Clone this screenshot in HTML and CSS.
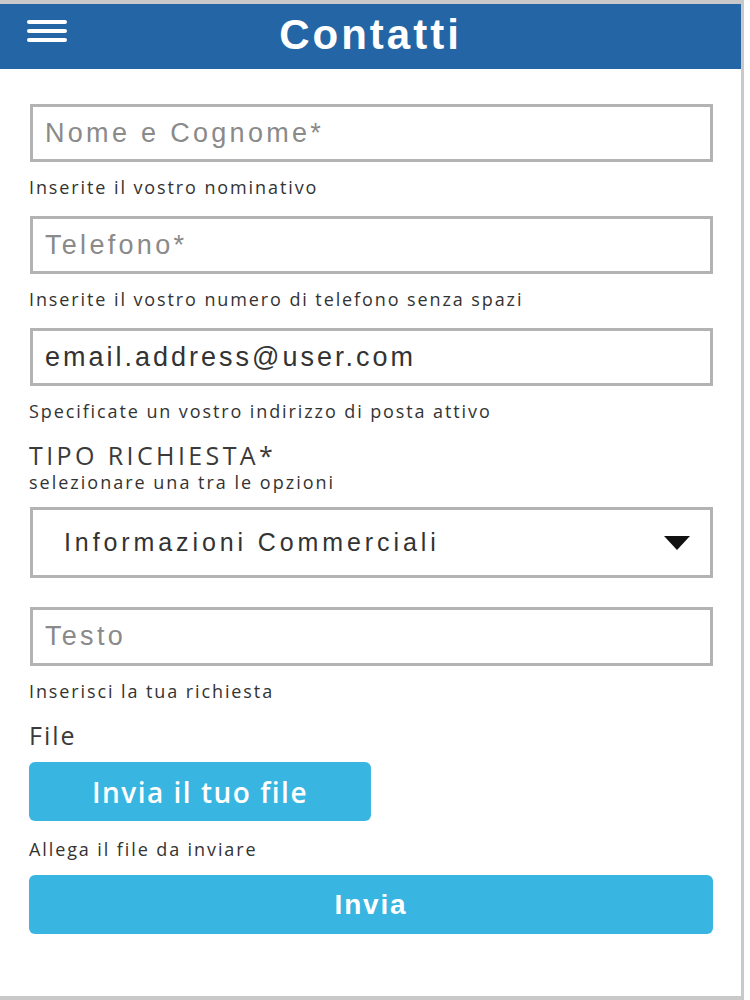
FILE: index.html
```html
<!DOCTYPE html>
<html lang="it">
<head>
    <meta charset="UTF-8">
    <meta name="viewport" content="width=device-width, initial-scale=1.0">
    <title>Contatti</title>
    <link rel="stylesheet" href="styles.css">
</head>
<body>
    <div class="frame">
        <header class="topbar">
            <button class="menu-btn" aria-label="Menu">
                <svg width="42" height="24" viewBox="0 0 42 24">
                    <rect x="1" y="1" width="40" height="4" rx="2" fill="#fff"/>
                    <rect x="1" y="10" width="40" height="4" rx="2" fill="#fff"/>
                    <rect x="1" y="19" width="40" height="4" rx="2" fill="#fff"/>
                </svg>
            </button>
            <h1>Contatti</h1>
        </header>

        <form class="contact-form">
            <input type="text" class="field" placeholder="Nome e Cognome*">
            <p class="hint">Inserite il vostro nominativo</p>

            <input type="tel" class="field" placeholder="Telefono*">
            <p class="hint">Inserite il vostro numero di telefono senza spazi</p>

            <input type="email" class="field field-email" value="email.address@user.com">
            <p class="hint">Specificate un vostro indirizzo di posta attivo</p>

            <p class="section-title">TIPO RICHIESTA*</p>
            <p class="section-sub">selezionare una tra le opzioni</p>

            <div class="select-box">
                <span>Informazioni Commerciali</span>
                <svg width="26" height="14" viewBox="0 0 26 14">
                    <polygon points="0,0 26,0 13,14" fill="#111"/>
                </svg>
            </div>

            <input type="text" class="field field-text" placeholder="Testo">
            <p class="hint">Inserisci la tua richiesta</p>

            <p class="section-title file-title">File</p>
            <button type="button" class="btn btn-file">Invia il tuo file</button>
            <p class="hint hint-file">Allega il file da inviare</p>

            <button type="submit" class="btn btn-send">Invia</button>
        </form>
    </div>
</body>
</html>
```

FILE: styles.css
```css
body {
    margin: 0;
    background: #fff;
    font-family: "Open Sans", sans-serif;
}
.frame {
    width: 741px;
    height: 992px;
    border-top: 4px solid #c9c9c9;
    border-right: 3px solid #c9c9c9;
    border-bottom: 4px solid #c9c9c9;
    background: #fff;
}
.topbar {
    height: 65px;
    background-color: #2466a5;
    display: flex;
    align-items: center;
    justify-content: center;
    position: relative;
}
.menu-btn {
    position: absolute;
    left: 26px;
    top: 15px;
    background: none;
    border: none;
    padding: 0;
}
.topbar h1 {
    margin: 0 0 4px 0;
    color: #fff;
    font-family: "Liberation Sans", Arial, sans-serif;
    font-weight: bold;
    font-size: 42px;
    letter-spacing: 3px;
}
.contact-form {
    display: flex;
    flex-direction: column;
    align-items: flex-start;
    padding: 35px 29px 0 29px;
}
.field {
    box-sizing: border-box;
    width: 683px;
    height: 58px;
    margin: 0 0 0 1px;
    border: 3px solid #b3b3b3;
    padding: 0 12px;
    font-family: "Liberation Sans", Arial, sans-serif;
    font-size: 27px;
    letter-spacing: 3.3px;
    color: #333;
    outline: none;
}
.field::placeholder {
    color: #8a8a8a;
}
.field-email {
    letter-spacing: 3px;
}
.hint {
    margin: 14px 0 18px 0;
    font-size: 18px;
    line-height: 22px;
    letter-spacing: 1.9px;
    color: #333;
}
.section-title {
    margin: 0;
    font-size: 25px;
    line-height: 30px;
    letter-spacing: 3.4px;
    color: #3a3a3a;
}
.section-sub {
    margin: 2px 0 15px 0;
    font-size: 18px;
    line-height: 20px;
    letter-spacing: 2px;
    color: #333;
}
.select-box {
    box-sizing: border-box;
    width: 683px;
    height: 71px;
    margin-left: 1px;
    border: 3px solid #b3b3b3;
    display: flex;
    align-items: center;
    justify-content: space-between;
    padding: 0 20px 0 31px;
    font-family: "Liberation Sans", Arial, sans-serif;
    font-size: 25px;
    letter-spacing: 3.9px;
    color: #333;
}
.field-text {
    margin-top: 29px;
    height: 59px;
}
.file-title {
    margin-top: 0;
    letter-spacing: 2px;
}
.btn {
    border: none;
    border-radius: 6px;
    background-color: #39b5e1;
    color: #fff;
    font-family: "Open Sans", sans-serif;
    font-weight: 600;
    font-size: 28px;
    letter-spacing: 1.5px;
    height: 59px;
    cursor: pointer;
}
.btn-file {
    width: 342px;
    margin-top: 12px;
}
.hint-file {
    margin: 17px 0 15px 0;
}
.btn-send {
    width: 684px;
    font-family: "Liberation Sans", Arial, sans-serif;
    font-weight: bold;
    font-size: 28px;
    letter-spacing: 1.8px;
}
```
